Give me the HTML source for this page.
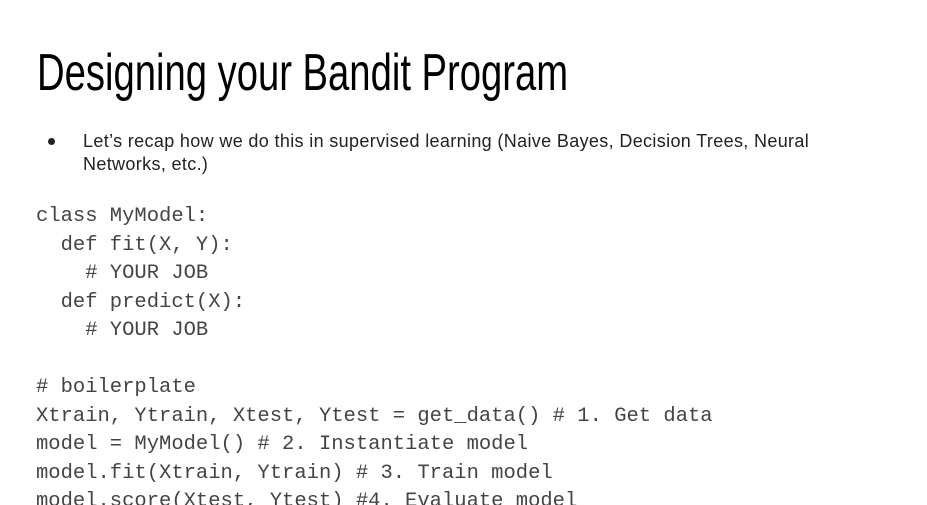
<!DOCTYPE html>
<html><head><style>
html,body{margin:0;padding:0;background:#fff;width:927px;height:505px;overflow:hidden;position:relative}
.t{position:absolute;left:37px;top:43px;font-family:"Liberation Sans Narrow","Liberation Sans",sans-serif;font-size:52px;color:#000;white-space:nowrap;transform-origin:0 0;transform:scaleX(0.735)}
.b{position:absolute;left:83px;top:130px;width:760px;font-family:"Liberation Sans",sans-serif;font-size:18px;letter-spacing:0.35px;line-height:23px;color:#222}
.dot{position:absolute;left:48px;top:138px;width:7px;height:7px;border-radius:50%;background:#222}
pre{position:absolute;left:36px;top:203px;margin:0;font-family:"Liberation Mono",monospace;font-size:20.5px;line-height:28.5px;color:#444}
</style></head><body>
<div class="t">Designing your Bandit Program</div>
<div class="dot"></div>
<div class="b">Let’s recap how we do this in supervised learning (Naive Bayes, Decision Trees, Neural Networks, etc.)</div>
<pre>class MyModel:
  def fit(X, Y):
    # YOUR JOB
  def predict(X):
    # YOUR JOB

# boilerplate
Xtrain, Ytrain, Xtest, Ytest = get_data() # 1. Get data
model = MyModel() # 2. Instantiate model
model.fit(Xtrain, Ytrain) # 3. Train model
model.score(Xtest, Ytest) #4. Evaluate model</pre>
</body></html>
